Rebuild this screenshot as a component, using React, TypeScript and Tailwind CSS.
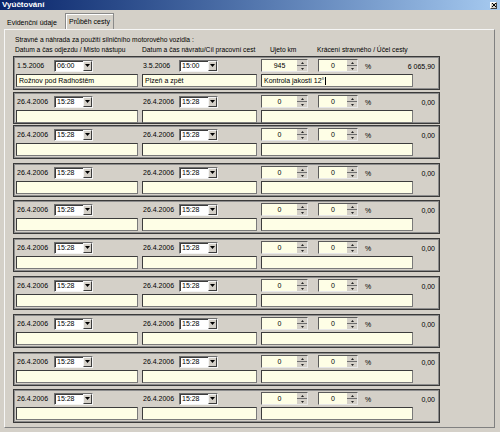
import React from "react";

type RowData = {
  d1: string;
  t1: string;
  d2: string;
  t2: string;
  km: string;
  pct: string;
  val: string;
  p1: string;
  p2: string;
  p3: string;
  cursor?: boolean;
};

function DownArrow() {
  return (
    <svg width="5" height="3" viewBox="0 0 5 3">
      <path d="M0 0H5L2.5 3Z" fill="#000" />
    </svg>
  );
}

function Combo({ value }: { value: string }) {
  return (
    <div className="flex h-[12px] w-[39px] border border-t-[#6f6f6f] border-l-[#6f6f6f] border-b-[#f4f4f4] border-r-[#f4f4f4]">
      <div className="flex flex-1 items-center bg-white pl-[2px] text-[7px] leading-none text-black shadow-[inset_1px_1px_0_#3c3c3c]">
        {value}
      </div>
      <div className="flex w-[9px] items-center justify-center border border-t-[#f4f4f4] border-l-[#f4f4f4] border-b-[#3c3c3c] border-r-[#3c3c3c] bg-[#d4d0c8]">
        <DownArrow />
      </div>
    </div>
  );
}

function Spin({ value, w }: { value: string; w: string }) {
  return (
    <div className={`flex h-[13px] ${w} border border-t-[#5a5a5a] border-l-[#5a5a5a] border-b-[#e8e8e8] border-r-[#e8e8e8] bg-[#fefee6]`}>
      <div className="flex flex-1 items-center justify-center text-[7px] leading-none text-black">
        {value}
      </div>
      <div className="flex w-[10px] flex-col bg-[#d4d0c8]">
        <div className="flex flex-1 items-center justify-center border-b border-b-[#6f6f6f]">
          <svg width="3" height="2" viewBox="0 0 3 2">
            <path d="M0 2H3L1.5 0Z" fill="#222" />
          </svg>
        </div>
        <div className="flex flex-1 items-center justify-center">
          <svg width="3" height="2" viewBox="0 0 3 2">
            <path d="M0 0H3L1.5 2Z" fill="#222" />
          </svg>
        </div>
      </div>
    </div>
  );
}

function TextBox({ value, w, cursor }: { value: string; w: string; cursor?: boolean }) {
  return (
    <div className={`flex h-[13px] ${w} items-center border border-t-[#3c3c3c] border-l-[#3c3c3c] border-b-[#7a7a7a] border-r-[#7a7a7a] bg-[#fefee6] pl-[2px] text-[7px] leading-none text-black`}>
      {value}
      {cursor ? <span className="ml-[1px] inline-block h-[8px] w-[1px] bg-black" /> : null}
    </div>
  );
}

function Row({ r, cls }: { r: RowData; cls: string }) {
  return (
    <div className={`ml-[8px] w-[427px] border border-[#3a3a3a] pl-[2px] pr-[2px] pt-[2px] shadow-[inset_0_0_0_1px_#8c8c8c] ${cls}`}>
      <div className="flex h-[13px] items-center">
        <div className="flex w-[122px] items-center">
          <span className="w-[38px] pl-[1px] text-[7px] leading-none">{r.d1}</span>
          <Combo value={r.t1} />
        </div>
        <div className="ml-[4px] flex w-[115px] items-center">
          <span className="w-[37px] pl-[1px] text-[7px] leading-none">{r.d2}</span>
          <Combo value={r.t2} />
        </div>
        <div className="ml-[4px] flex flex-1 items-center">
          <Spin value={r.km} w="w-[47px]" />
          <div className="ml-[10px]">
            <Spin value={r.pct} w="w-[40px]" />
          </div>
          <span className="ml-[7px] pt-[2px] text-[7px] leading-none">%</span>
          <span className="flex-1 pr-[2px] pt-[1px] text-right text-[7px] leading-none">{r.val}</span>
        </div>
      </div>
      <div className="mt-[2px] flex">
        <TextBox value={r.p1} w="w-[122px]" />
        <div className="ml-[4px]">
          <TextBox value={r.p2} w="w-[115px]" />
        </div>
        <div className="ml-[4px]">
          <TextBox value={r.p3} w="w-[152px]" cursor={r.cursor} />
        </div>
      </div>
    </div>
  );
}

const empty: RowData = {
  d1: "26.4.2006",
  t1: "15:28",
  d2: "26.4.2006",
  t2: "15:28",
  km: "0",
  pct: "0",
  val: "0,00",
  p1: "",
  p2: "",
  p3: "",
};

const first: RowData = {
  d1: "1.5.2006",
  t1: "06:00",
  d2: "3.5.2006",
  t2: "15:00",
  km: "945",
  pct: "0",
  val: "6 065,90",
  p1: "Rožnov pod Radhoštěm",
  p2: "Plzeň a zpět",
  p3: "Kontrola jakosti 12°",
  cursor: true,
};

export default function App() {
  return (
    <div
      className="relative h-[432px] w-[500px] overflow-hidden bg-[#d4d0c8] text-black"
      style={{ fontFamily: '"Liberation Sans", Arial, sans-serif' }}
    >
      {/* Title bar */}
      <div className="flex h-[10px] items-center justify-between bg-linear-to-r from-[#0a246a] to-[#a6caf0]">
        <span className="pl-[2px] text-[8px] font-bold leading-none text-white">Vyúčtování</span>
        <div className="mr-[3px] flex h-[7px] w-[7px] items-center justify-center border border-t-white border-l-white border-b-[#404040] border-r-[#404040] bg-[#d4d0c8]">
          <svg width="4" height="4" viewBox="0 0 4 4">
            <path d="M0 0L4 4M4 0L0 4" stroke="#000" strokeWidth="1" />
          </svg>
        </div>
      </div>

      {/* Tabs */}
      <div className="flex h-[19px] items-end pl-[4px]">
        <div className="flex h-[14px] w-[58px] items-center pl-[3px] text-[7px] leading-none">Evidenční údaje</div>
        <div className="ml-[3px] flex h-[16px] w-[49px] items-center justify-center border border-b-0 border-[#8a8a8a] text-[7px] leading-none shadow-[inset_1px_1px_0_#ffffff]">
          Průběh cesty
        </div>
      </div>

      {/* Panel */}
      <div className="ml-[4px] h-[399px] w-[491px] border border-t-[#f6f6f6] border-l-[#f6f6f6] border-b-[#808080] border-r-[#808080]">
        <div className="pl-[10px] pt-[5px]">
          <div className="h-[10px] whitespace-nowrap text-[6.7px] leading-[10px]">
            Stravné a náhrada za použití silničního motorového vozidla :
          </div>
          <div className="flex h-[10px] whitespace-nowrap text-[6.7px] leading-[10px]">
            <span className="w-[127px]">Datum a čas odjezdu / Místo nástupu</span>
            <span className="w-[119px]">Datum a čas návratu/Cíl pracovní cest</span>
            <span className="w-[56px] pl-[9px]">Ujeto km</span>
            <span>Krácení stravného / Účel cesty</span>
          </div>
        </div>
        <div className="mt-[1px] flex flex-col">
          <Row r={first} cls="h-[34px]" />
          <Row r={empty} cls="mt-[2px] h-[32px]" />
          <Row r={empty} cls="mt-[1px] h-[34px]" />
          <Row r={empty} cls="mt-[4px] h-[34px]" />
          <Row r={empty} cls="mt-[3px] h-[34px]" />
          <Row r={empty} cls="mt-[4px] h-[34px]" />
          <Row r={empty} cls="mt-[4px] h-[34px]" />
          <Row r={empty} cls="mt-[4px] h-[34px]" />
          <Row r={empty} cls="mt-[4px] h-[34px]" />
          <Row r={empty} cls="mt-[3px] h-[34px]" />
        </div>
      </div>
    </div>
  );
}
